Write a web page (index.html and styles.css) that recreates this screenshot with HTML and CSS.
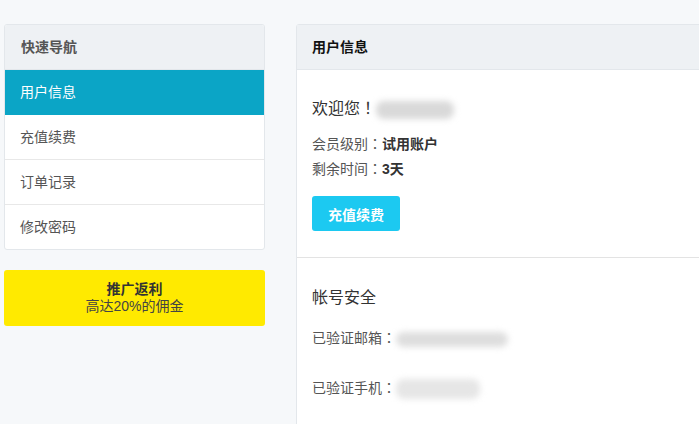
FILE: index.html
```html
<!DOCTYPE html>
<html lang="zh-CN">
<head>
    <meta charset="UTF-8">
    <title>用户中心</title>
    <link rel="stylesheet" href="styles.css">
</head>
<body>
    <div class="page">
        <div class="side">
            <div class="nav">
                <div class="nav-title">快速导航</div>
                <a class="nav-item active">用户信息</a>
                <a class="nav-item">充值续费</a>
                <a class="nav-item">订单记录</a>
                <a class="nav-item">修改密码</a>
            </div>
            <div class="promo">
                <strong>推广返利</strong>
                <span>高达20%的佣金</span>
            </div>
        </div>

        <div class="panel">
            <div class="panel-title">用户信息</div>
            <div class="section">
                <h3 class="welcome">欢迎您<span lang="zh-Hant">！</span><span class="blur blur-name"></span></h3>
                <p class="line">会员级别<span lang="zh-Hant">：</span><b>试用账户</b></p>
                <p class="line">剩余时间<span lang="zh-Hant">：</span><b>3天</b></p>
                <button class="btn">充值续费</button>
            </div>
            <div class="section">
                <h3 class="sec-title">帐号安全</h3>
                <p class="row">已验证邮箱<span lang="zh-Hant">：</span><span class="blur blur-mail"></span></p>
                <p class="row">已验证手机<span lang="zh-Hant">：</span><span class="blur blur-phone"></span></p>
            </div>
        </div>
    </div>
</body>
</html>
```

FILE: styles.css
```css
* {
    margin: 0;
    padding: 0;
    box-sizing: border-box;
}

body {
    background: #f6f8fa;
    font-family: "Liberation Sans", "Noto Sans CJK SC", sans-serif;
    font-size: 14px;
    color: #555;
    overflow: hidden;
}

.page {
    display: flex;
    gap: 31px;
    padding: 24px 0 0 4px;
    width: 900px;
}

.side {
    width: 261px;
    flex-shrink: 0;
}

.nav {
    background: #fff;
    border: 1px solid #e3e7eb;
    border-radius: 3px;
    overflow: hidden;
}

.nav-title {
    height: 45px;
    line-height: 44px;
    padding-left: 16px;
    background: #eef1f4;
    border-bottom: 1px solid #e3e7eb;
    font-weight: bold;
    color: #555;
}

.nav-item {
    display: block;
    height: 45px;
    line-height: 44px;
    padding-left: 15px;
    border-bottom: 1px solid #e8e8e8;
    color: #555;
}

.nav-item:last-child {
    height: 44px;
    border-bottom: none;
}

.nav-item.active {
    background: #0ba5c6;
    color: #fff;
    border-bottom-color: #0ba5c6;
}

.promo {
    margin-top: 20px;
    height: 56px;
    background: #ffea00;
    border-radius: 3px;
    display: flex;
    flex-direction: column;
    align-items: center;
    justify-content: center;
    line-height: 17px;
    color: #444;
}

.promo strong {
    color: #333;
}

.panel {
    width: 440px;
    flex-shrink: 0;
    background: #fff;
    border: 1px solid #e3e7eb;
    border-radius: 3px;
    min-height: 420px;
}

.panel-title {
    height: 45px;
    line-height: 44px;
    padding-left: 15px;
    background: #eef1f4;
    border-bottom: 1px solid #e3e7eb;
    font-weight: bold;
    color: #111;
}

.section {
    padding: 27px 15px 26px;
    border-bottom: 1px solid #e3e3e3;
}

.section:last-child {
    border-bottom: none;
}

.welcome,
.sec-title {
    font-size: 16px;
    font-weight: normal;
    color: #333;
    line-height: 24px;
}

.line {
    line-height: 25px;
}

.welcome + .line {
    margin-top: 11px;
}

.line b {
    color: #333;
}

.btn {
    margin-top: 14px;
    width: 88px;
    height: 35px;
    border: none;
    border-radius: 3px;
    background: #1cc9f1;
    color: #fff;
    font-weight: bold;
    font-size: 14px;
    font-family: inherit;
}

.sec-title {
    margin-top: 1px;
}

.row {
    line-height: 20px;
    margin-top: 18px;
}

.row + .row {
    margin-top: 30px;
}

.blur {
    display: inline-block;
    vertical-align: middle;
    background: #d6d6d6;
    filter: blur(3px);
    border-radius: 8px;
}

.blur-name {
    width: 78px;
    height: 18px;
    background: #d9d9d9;
}

.blur-mail {
    width: 112px;
    height: 15px;
    background: #dedede;
}

.blur-phone {
    width: 84px;
    height: 20px;
    background: #e6e6e6;
}
```
